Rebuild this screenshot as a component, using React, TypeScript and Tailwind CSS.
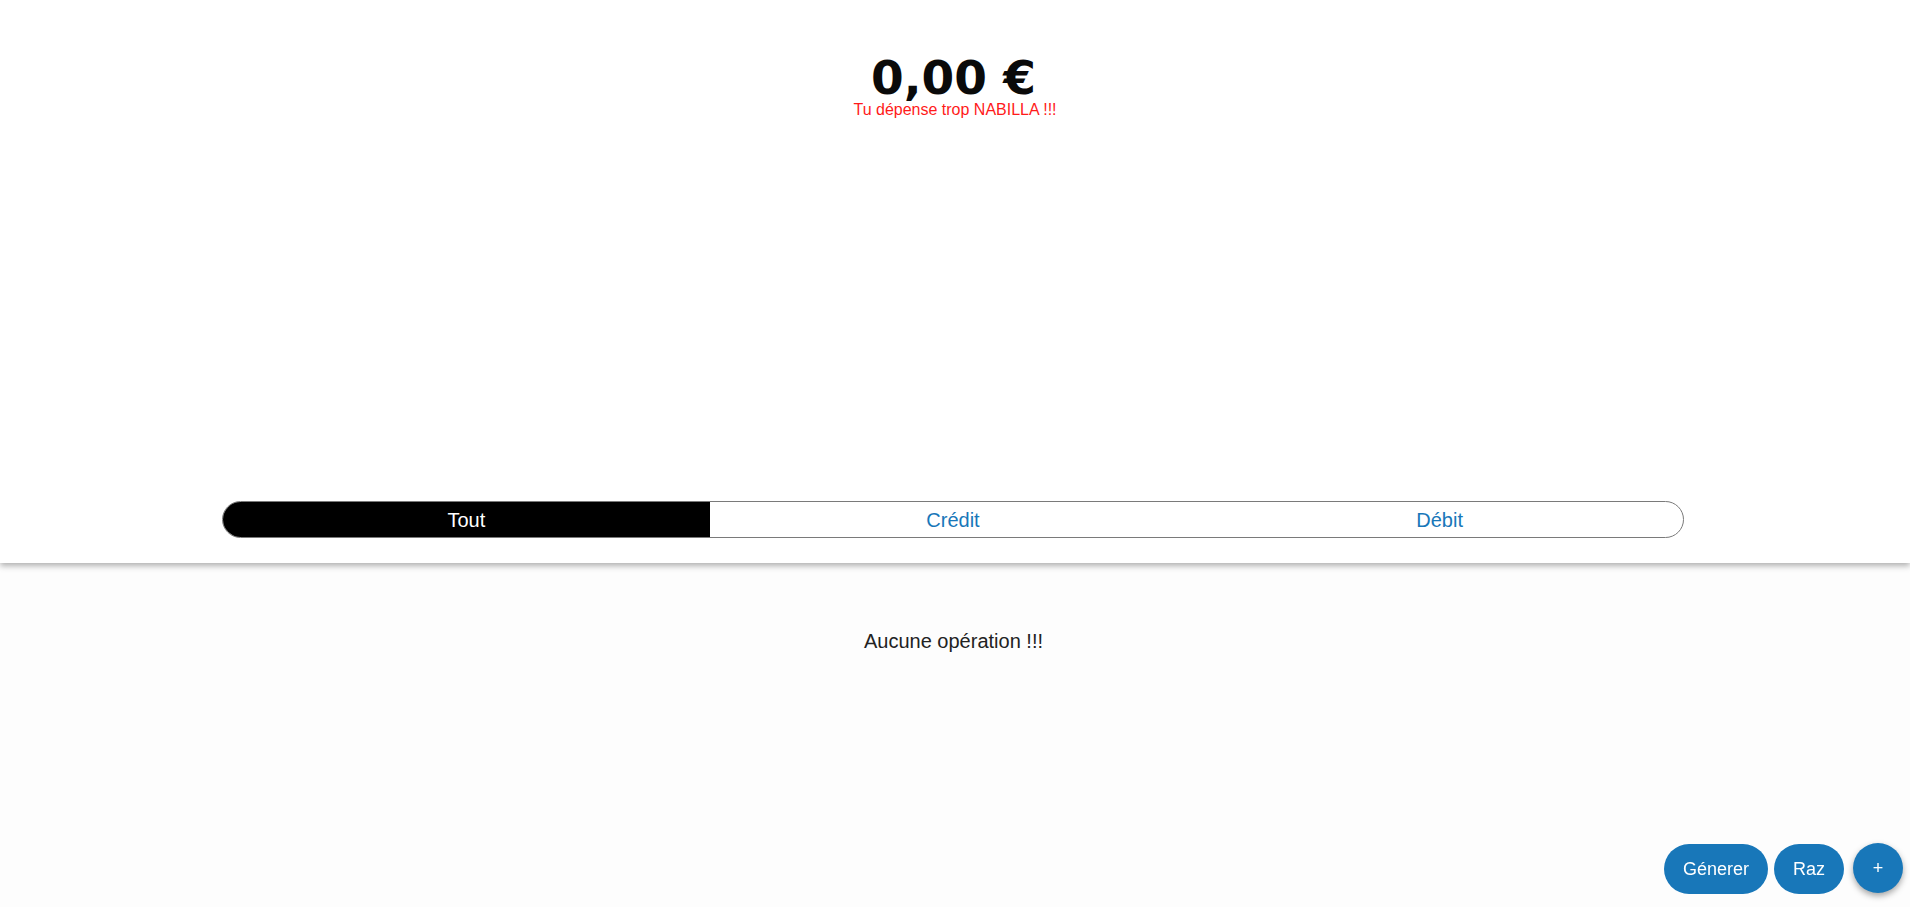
import React from "react";

export default function App() {
  return (
    <div className="min-h-[907px] bg-[#fdfdfd] flex flex-col" style={{ fontFamily: "'Liberation Sans', Arial, sans-serif" }}>
      <header className="relative z-10 bg-white h-[563px] shadow-[0_3px_6px_rgba(0,0,0,0.3)] flex flex-col items-center">
        <div className="mt-[55px] ml-[-3px] text-[47px] leading-[46px] font-bold text-[#0a0a0a]" style={{ fontFamily: "'DejaVu Sans', Verdana, sans-serif" }}>
          0,00 €
        </div>
        <div className="text-[16px] leading-[18px] text-[#ff1a1a]">Tu dépense trop NABILLA !!!</div>
        <div className="flex-1" />
        <div className="mb-[25px] ml-[-4px] w-[1462px] h-[37px] rounded-full border border-[#7a7a7a] overflow-hidden grid grid-cols-3 text-[20px]">
          <div className="bg-black text-white flex items-center justify-center">Tout</div>
          <div className="text-[#1877b9] flex items-center justify-center">Crédit</div>
          <div className="text-[#1877b9] flex items-center justify-center">Débit</div>
        </div>
      </header>
      <main className="flex-1 flex flex-col items-center">
        <div className="mt-[63px] ml-[-3px] text-[20px] text-[#222]">Aucune opération !!!</div>
      </main>
      <div className="fixed right-[7px] bottom-[12px] flex items-center gap-[6px]">
        <button className="h-[50px] px-[19px] rounded-full bg-[#1877b9] text-white text-[18px]">Génerer</button>
        <button className="h-[50px] px-[19px] rounded-full bg-[#1877b9] text-white text-[18px]">Raz</button>
        <button className="ml-[3px] w-[50px] h-[50px] rounded-full bg-[#1877b9] text-white text-[18px] shadow-[0_3px_6px_rgba(0,0,0,0.35)] mb-[2px]">+</button>
      </div>
    </div>
  );
}
